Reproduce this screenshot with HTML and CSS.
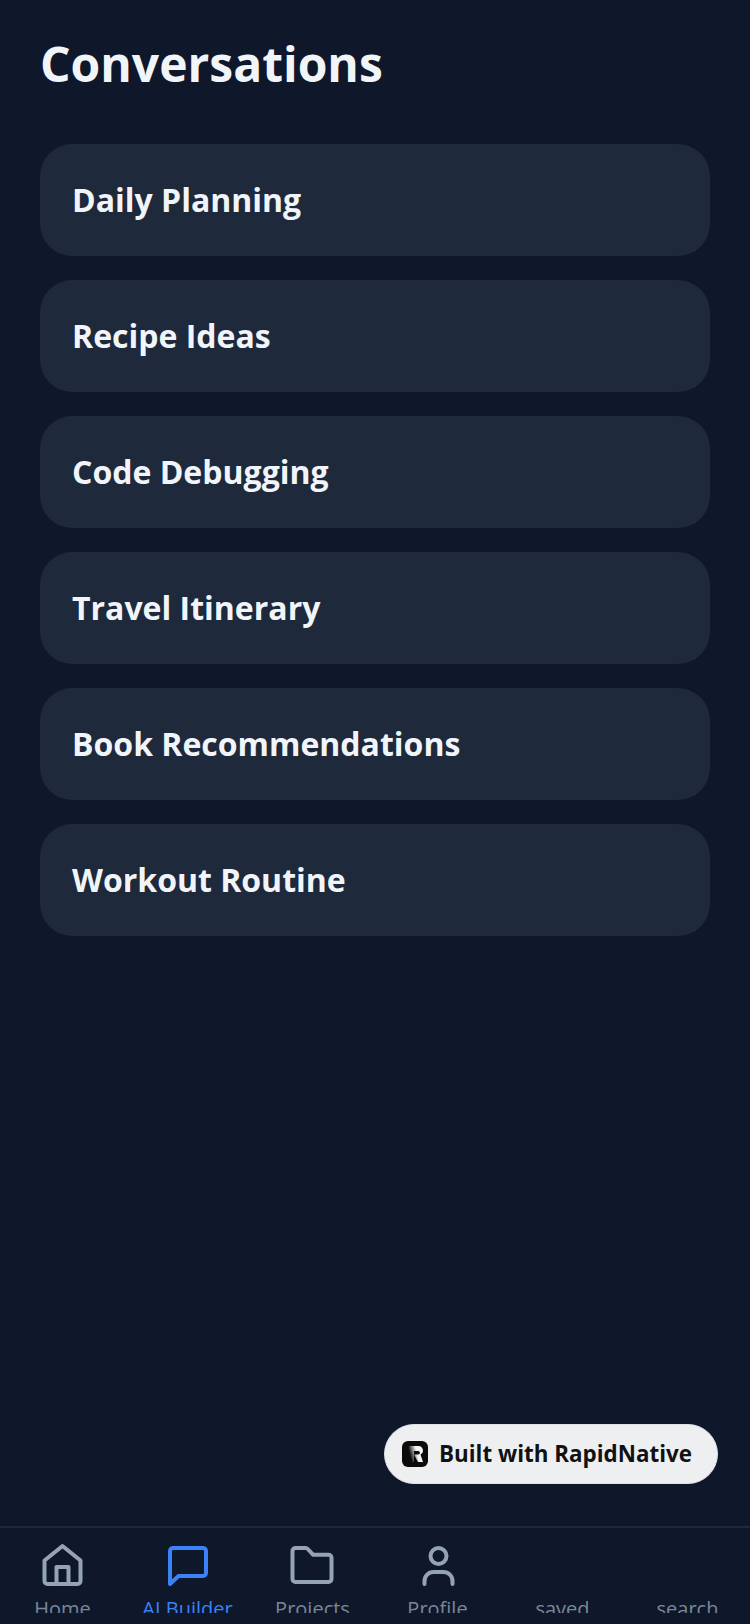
FILE: index.html
```html
<!DOCTYPE html>
<html lang="en">
<head>
  <meta charset="UTF-8">
  <meta name="viewport" content="width=device-width, initial-scale=1.0">
  <title>Conversations</title>
  <link rel="stylesheet" href="styles.css">
</head>
<body>

<main class="content">
  <h1 class="title">Conversations</h1>
  <ul class="chat-list">
    <li class="chat-item">Daily Planning</li>
    <li class="chat-item">Recipe Ideas</li>
    <li class="chat-item">Code Debugging</li>
    <li class="chat-item">Travel Itinerary</li>
    <li class="chat-item">Book Recommendations</li>
    <li class="chat-item">Workout Routine</li>
  </ul>
</main>

<a class="badge" href="#">
  <svg class="badge-logo" viewBox="0 0 26 26">
    <defs>
      <linearGradient id="logo-fade" x1="0" y1="0.7" x2="1" y2="0.4">
        <stop offset="0.1" stop-color="#0b0b0c"/>
        <stop offset="0.6" stop-color="#f4f4f5"/>
      </linearGradient>
    </defs>
    <rect width="26" height="26" rx="6" fill="#0b0b0c"/>
    <path d="M7 5h9.500a4.500 4.500 0 0 1 2 8.500L21 21h-5l-4-7.500h4.200a1.700 1.700 0 0 0 0-3.500H12v11H7z" fill="url(#logo-fade)"/>
  </svg>
  <span>Built with RapidNative</span>
</a>

<nav class="tabs">
  <div class="tab">
    <svg class="tab-icon" viewBox="0 0 48 48" fill="none" stroke="currentColor" stroke-width="4" stroke-linejoin="round" stroke-linecap="round">
      <path d="M5.500 18.500 23.500 4l18 14.500V39a3 3 0 0 1-3 3h-30a3 3 0 0 1-3-3z"/>
      <path d="M17.500 42V25h12v17"/>
    </svg>
    <span class="tab-label">Home</span>
  </div>
  <div class="tab tab-active">
    <svg class="tab-icon" viewBox="0 0 48 48" fill="none" stroke="currentColor" stroke-width="4" stroke-linejoin="round" stroke-linecap="round">
      <path d="M9 6h30a3 3 0 0 1 3 3v22a3 3 0 0 1-3 3H14.500L6 42V9a3 3 0 0 1 3-3z"/>
    </svg>
    <span class="tab-label">AI Builder</span>
  </div>
  <div class="tab">
    <svg class="tab-icon" viewBox="0 0 48 48" fill="none" stroke="currentColor" stroke-width="4" stroke-linejoin="round" stroke-linecap="round">
      <path d="M3.500 9a3 3 0 0 1 3-3h10a3 3 0 0 1 2.300 1l5.200 5.700h15.500a3 3 0 0 1 3 3V37a3 3 0 0 1-3 3h-33a3 3 0 0 1-3-3z"/>
    </svg>
    <span class="tab-label">Projects</span>
  </div>
  <div class="tab">
    <svg class="tab-icon" viewBox="0 0 48 48" fill="none" stroke="currentColor" stroke-width="4" stroke-linejoin="round" stroke-linecap="round">
      <circle cx="24.500" cy="14" r="8"/>
      <path d="M10.500 42v-3a9 9 0 0 1 9-9h10a9 9 0 0 1 9 9v3"/>
    </svg>
    <span class="tab-label">Profile</span>
  </div>
  <div class="tab">
    <div class="tab-icon"></div>
    <span class="tab-label">saved</span>
  </div>
  <div class="tab">
    <div class="tab-icon"></div>
    <span class="tab-label">search</span>
  </div>
</nav>

</body>
</html>
```

FILE: styles.css
```css
/* General Styles */
* {
  box-sizing: border-box;
}
body {
  position: relative;
  display: flex;
  flex-direction: column;
  height: 1624px;
  margin: 0;
  overflow: hidden;
  font-family: "Open Sans", sans-serif;
  background-color: #0f172a;
}

/* Conversation list */
.content {
  flex: 1;
  padding: 32px 40px 0;
}
.title {
  margin: 0 0 48px;
  font-size: 48px;
  line-height: 64px;
  font-weight: 700;
  color: #f1f5f9;
}
.chat-list {
  display: flex;
  flex-direction: column;
  gap: 24px;
  list-style: none;
  margin: 0;
  padding: 0;
}
.chat-item {
  display: flex;
  align-items: center;
  height: 112px;
  padding: 0 32px 2px;
  border-radius: 32px;
  background-color: #1e293b;
  color: #f1f5f9;
  font-size: 32px;
  font-weight: 700;
}

/* Floating badge */
.badge {
  position: absolute;
  left: 384px;
  top: 1424px;
  display: flex;
  align-items: center;
  gap: 11px;
  width: 334px;
  height: 60px;
  padding: 0 17px 1px;
  border: 1px solid #dde1e7;
  border-radius: 30px;
  background-color: #eeeff1;
  color: #111113;
  font-size: 22.4px;
  font-weight: 700;
  text-decoration: none;
}
.badge-logo {
  width: 26px;
  height: 26px;
}

/* Bottom tabs */
.tabs {
  display: flex;
  height: 98px;
  padding-bottom: 11px;
  border-top: 2px solid #1e293b;
}
.tab {
  display: flex;
  flex-direction: column;
  align-items: center;
  flex: 1;
  min-width: 0;
  padding-top: 14px;
  overflow: hidden;
  color: #94a3b8;
}
.tab-active {
  color: #3b82f6;
}
.tab-icon {
  flex: none;
  width: 48px;
  height: 48px;
}
.tab-label {
  margin-top: 4px;
  font-size: 20px;
  line-height: 30px;
  opacity: 0.8;
}
.tab-active .tab-label {
  opacity: 1;
}
```
